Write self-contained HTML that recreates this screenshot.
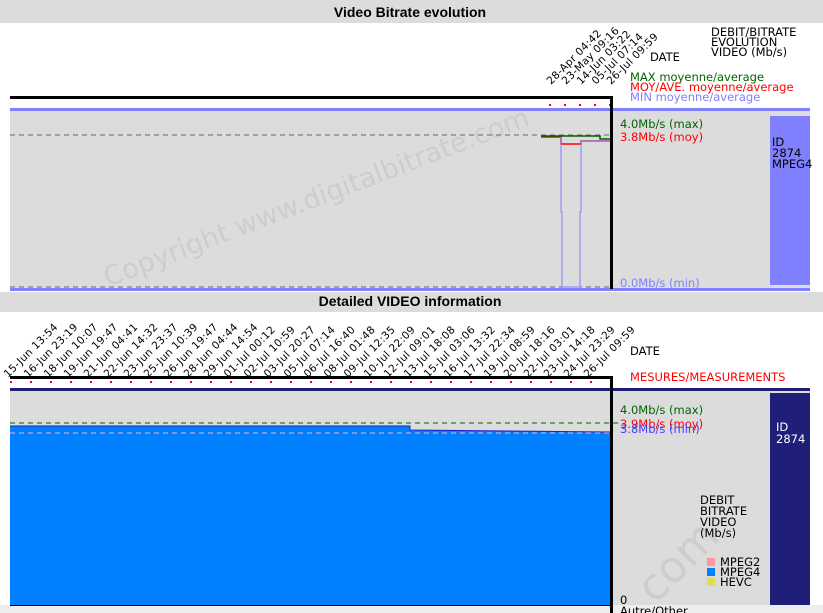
<!DOCTYPE html>
<html><head><style>
html,body{margin:0;padding:0;background:#fff;width:823px;height:613px;overflow:hidden}
svg text{font-family:"DejaVu Sans","Liberation Sans",sans-serif;font-size:11.5px}
svg g.r text{font-size:10.5px;letter-spacing:0.3px}
</style></head><body>
<svg width="823" height="613" xmlns="http://www.w3.org/2000/svg">
<rect x="0" y="0" width="823" height="23" fill="#dcdcdc"/>
<text x="410" y="17" text-anchor="middle" style="font-family:'Liberation Sans',sans-serif;font-size:14px;font-weight:bold">Video Bitrate evolution</text>
<g class="r" fill="#000">
<text transform="translate(551,85) rotate(-45)">28-Apr 04:42</text>
<text transform="translate(566,85) rotate(-45)">23-May 09:16</text>
<text transform="translate(581,85) rotate(-45)">14-Jun 03:22</text>
<text transform="translate(596,85) rotate(-45)">05-Jul 07:14</text>
<text transform="translate(611,85) rotate(-45)">26-Jul 09:59</text>
</g>
<text x="650" y="61">DATE</text>
<text x="711" y="36">DEBIT/BITRATE</text>
<text x="711" y="46">EVOLUTION</text>
<text x="711" y="56">VIDEO (Mb/s)</text>
<text x="630" y="81" fill="#006400">MAX moyenne/average</text>
<text x="630" y="91" fill="#ff0000">MOY/AVE. moyenne/average</text>
<text x="630" y="101" fill="#8080ff">MIN moyenne/average</text>
<rect x="10" y="96" width="602" height="3" fill="#000"/>
<g fill="#f00"><rect x="549" y="104" width="2" height="2"/><rect x="564" y="104" width="2" height="2"/><rect x="579" y="104" width="2" height="2"/><rect x="594" y="104" width="2" height="2"/><rect x="609" y="104" width="2" height="2"/></g>
<rect x="10" y="108" width="800" height="3" fill="#8080ff"/>
<rect x="10" y="111" width="800" height="177" fill="#dcdcdc"/>
<text x="108" y="287" transform="rotate(-21 108 287)" fill="#cdcdcd" style="font-size:27px">Copyright www.digitalbitrate.com</text>
<rect x="770" y="116" width="40" height="169" fill="#8080ff"/>
<text x="772" y="146">ID</text><text x="772" y="157">2874</text><text x="772" y="168">MPEG4</text>
<line x1="10" y1="135" x2="610" y2="135" stroke="#666" stroke-dasharray="5,4"/>
<line x1="10" y1="287" x2="610" y2="287" stroke="#666" stroke-dasharray="5,4"/>
<rect x="10" y="288" width="800" height="3" fill="#8080ff"/>
<polyline points="541,137 561,137 561,144 581,144 581,141 610,141" fill="none" stroke="#f00" stroke-width="1.5"/>
<polyline points="541,136 600,136 600,139 610,139" fill="none" stroke="#006400" stroke-width="1.5"/>
<polyline points="561,137 561,212 562,212 562,287 580,287 580,212 581,212 581,141 610,141" fill="none" stroke="#8080ff" stroke-width="1"/>
<rect x="610" y="96" width="3" height="193" fill="#000"/>
<text x="620" y="128" fill="#006400">4.0Mb/s (max)</text>
<text x="620" y="141" fill="#f00">3.8Mb/s (moy)</text>
<text x="620" y="287" fill="#8080ff">0.0Mb/s (min)</text>
<rect x="0" y="292" width="823" height="20" fill="#dcdcdc"/>
<text x="410" y="306" text-anchor="middle" style="font-family:'Liberation Sans',sans-serif;font-size:14px;font-weight:bold">Detailed VIDEO information</text>
<g class="r">
<text transform="translate(8,378) rotate(-45)">15-Jun 13:54</text>
<text transform="translate(28,378) rotate(-45)">16-Jun 23:19</text>
<text transform="translate(48,378) rotate(-45)">18-Jun 10:07</text>
<text transform="translate(68,378) rotate(-45)">19-Jun 19:47</text>
<text transform="translate(88,378) rotate(-45)">21-Jun 04:41</text>
<text transform="translate(108,378) rotate(-45)">22-Jun 14:32</text>
<text transform="translate(128,378) rotate(-45)">23-Jun 23:37</text>
<text transform="translate(148,378) rotate(-45)">25-Jun 10:39</text>
<text transform="translate(168,378) rotate(-45)">26-Jun 19:47</text>
<text transform="translate(188,378) rotate(-45)">28-Jun 04:44</text>
<text transform="translate(208,378) rotate(-45)">29-Jun 14:54</text>
<text transform="translate(228,378) rotate(-45)">01-Jul 00:12</text>
<text transform="translate(248,378) rotate(-45)">02-Jul 10:59</text>
<text transform="translate(268,378) rotate(-45)">03-Jul 20:27</text>
<text transform="translate(288,378) rotate(-45)">05-Jul 07:14</text>
<text transform="translate(308,378) rotate(-45)">06-Jul 16:40</text>
<text transform="translate(328,378) rotate(-45)">08-Jul 01:48</text>
<text transform="translate(348,378) rotate(-45)">09-Jul 12:35</text>
<text transform="translate(368,378) rotate(-45)">10-Jul 22:09</text>
<text transform="translate(388,378) rotate(-45)">12-Jul 09:01</text>
<text transform="translate(408,378) rotate(-45)">13-Jul 18:08</text>
<text transform="translate(428,378) rotate(-45)">15-Jul 03:06</text>
<text transform="translate(448,378) rotate(-45)">16-Jul 13:32</text>
<text transform="translate(468,378) rotate(-45)">17-Jul 22:34</text>
<text transform="translate(488,378) rotate(-45)">19-Jul 08:59</text>
<text transform="translate(508,378) rotate(-45)">20-Jul 18:16</text>
<text transform="translate(528,378) rotate(-45)">22-Jul 03:01</text>
<text transform="translate(548,378) rotate(-45)">23-Jul 14:18</text>
<text transform="translate(568,378) rotate(-45)">24-Jul 23:29</text>
<text transform="translate(588,378) rotate(-45)">26-Jul 09:59</text>
</g>
<text x="630" y="355">DATE</text>
<text x="630" y="381" fill="#f00">MESURES/MEASUREMENTS</text>
<rect x="10" y="376" width="602" height="3" fill="#000"/>
<g fill="#f00">
<rect x="10" y="381" width="2" height="2"/><rect x="30" y="381" width="2" height="2"/><rect x="50" y="381" width="2" height="2"/><rect x="70" y="381" width="2" height="2"/><rect x="90" y="381" width="2" height="2"/><rect x="110" y="381" width="2" height="2"/><rect x="130" y="381" width="2" height="2"/><rect x="150" y="381" width="2" height="2"/><rect x="170" y="381" width="2" height="2"/><rect x="190" y="381" width="2" height="2"/><rect x="210" y="381" width="2" height="2"/><rect x="230" y="381" width="2" height="2"/><rect x="250" y="381" width="2" height="2"/><rect x="270" y="381" width="2" height="2"/><rect x="290" y="381" width="2" height="2"/><rect x="310" y="381" width="2" height="2"/><rect x="330" y="381" width="2" height="2"/><rect x="350" y="381" width="2" height="2"/><rect x="370" y="381" width="2" height="2"/><rect x="390" y="381" width="2" height="2"/><rect x="410" y="381" width="2" height="2"/><rect x="430" y="381" width="2" height="2"/><rect x="450" y="381" width="2" height="2"/><rect x="470" y="381" width="2" height="2"/><rect x="490" y="381" width="2" height="2"/><rect x="510" y="381" width="2" height="2"/><rect x="530" y="381" width="2" height="2"/><rect x="550" y="381" width="2" height="2"/><rect x="570" y="381" width="2" height="2"/><rect x="590" y="381" width="2" height="2"/><rect x="610" y="381" width="2" height="2"/>
</g>
<rect x="10" y="388" width="800" height="3" fill="#1f1f7a"/>
<rect x="10" y="391" width="800" height="214" fill="#dcdcdc"/>
<text x="655" y="605" transform="rotate(-45 655 605)" fill="#cdcdcd" style="font-size:44px">com</text>
<rect x="770" y="393" width="40" height="220" fill="#1f1f7a"/>
<text x="776" y="431" fill="#fff">ID</text><text x="776" y="443" fill="#fff">2874</text>
<line x1="10" y1="423" x2="618" y2="423" stroke="#006400" stroke-dasharray="5,4"/>
<polygon points="10,426 410,426 410,430 610,432 610,605 10,605" fill="#0080ff"/>
<polyline points="10,426 410,426 410,430 610,432" fill="none" stroke="#2020c0"/>
<line x1="10" y1="433" x2="610" y2="433" stroke="#ffb0b0" stroke-dasharray="5,4"/>
<rect x="0" y="605" width="823" height="8" fill="#eee"/>
<rect x="10" y="605" width="600" height="1" fill="#000"/>
<rect x="610" y="376" width="3" height="237" fill="#000"/>
<text x="620" y="414" fill="#006400">4.0Mb/s (max)</text>
<text x="620" y="428" fill="#f00">3.9Mb/s (moy)</text>
<text x="620" y="433" fill="#4040ff">3.8Mb/s (min)</text>
<text x="700" y="504">DEBIT</text><text x="700" y="515">BITRATE</text><text x="700" y="526">VIDEO</text><text x="700" y="537">(Mb/s)</text>
<rect x="707" y="558" width="8" height="8" fill="#ff9999"/><text x="720" y="566">MPEG2</text>
<rect x="707" y="568" width="8" height="8" fill="#0080ff"/><text x="720" y="576">MPEG4</text>
<rect x="707" y="578" width="8" height="8" fill="#dddd55"/><text x="720" y="586">HEVC</text>
<text x="620" y="604">0</text>
<text x="620" y="615">Autre/Other</text>
</svg>
</body></html>
